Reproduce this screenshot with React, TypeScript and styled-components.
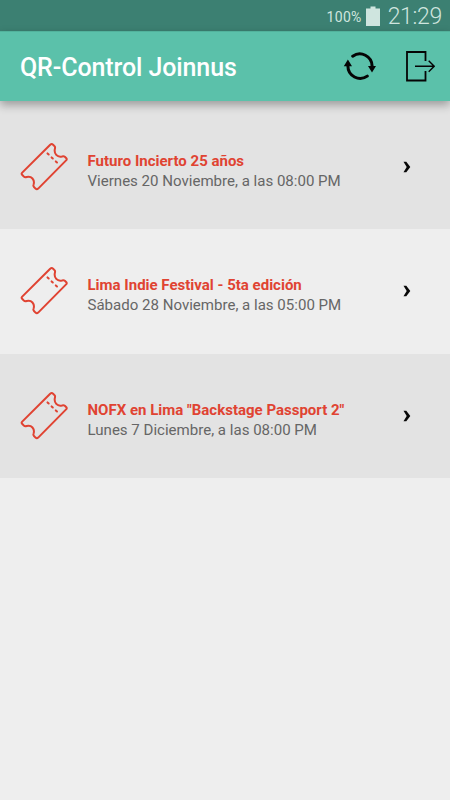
import React from "react";
import styled, { createGlobalStyle } from "styled-components";

const GlobalStyle = createGlobalStyle`
  * { box-sizing: border-box; }
  body { margin: 0; background: #eeeeee; font-family: Roboto, "Noto Sans", sans-serif; }
`;

const Screen = styled.div`
  display: flex;
  flex-direction: column;
  height: 800px;
  width: 450px;
  overflow: hidden;
  background: #eeeeee;
`;

const StatusBar = styled.div`
  flex: none;
  display: flex;
  align-items: center;
  justify-content: flex-end;
  height: 31px;
  padding: 2px 8px 0 0;
  background: #3c8072;
  color: #cfe5df;
`;

const BatteryLevel = styled.span`
  font-size: 14px;
  line-height: 20px;
  letter-spacing: 0.3px;
  margin-right: 4px;
`;

const BatteryIcon = styled.svg`
  width: 14px;
  height: 20px;
  margin: -2px 8px 0 0;
`;

const Clock = styled.span`
  font-size: 23px;
  line-height: 28px;
  font-weight: 350;
  letter-spacing: -0.3px;
`;

const Header = styled.header`
  flex: none;
  position: relative;
  z-index: 1;
  display: flex;
  align-items: center;
  height: 70px;
  padding: 0 15px 0 20px;
  background: #5bc1aa;
  border-top: 1px solid #52b29c;
  box-shadow: 0 4px 9px rgba(0, 0, 0, 0.32);
`;

const Title = styled.h1`
  flex: 1;
  margin: 2px 0 0;
  color: #fff;
  font-size: 25px;
  line-height: 32px;
  font-weight: 500;
  letter-spacing: -0.1px;
  white-space: nowrap;
`;

const Action = styled.button<{ $gap?: number }>`
  display: flex;
  padding: 0;
  border: 0;
  background: none;
  color: #050505;
  margin: -1px 0 0 ${(p) => p.$gap ?? 0}px;
`;

const List = styled.ul`
  margin: 0;
  padding: 3.4px 0 0;
  list-style: none;
  background: #e3e3e3;
`;

const Row = styled.li<{ $shaded: boolean }>`
  display: grid;
  grid-template-columns: 48px 1fr 8px;
  align-items: center;
  height: 124.6px;
  padding: 0 39.5px 0 20px;
  background: ${(p) => (p.$shaded ? "#e3e3e3" : "#eeeeee")};
`;

const Details = styled.div`
  margin-left: 19.5px;
  padding-top: 9px;
  white-space: nowrap;
`;

const EventName = styled.div`
  color: #e04332;
  font-size: 15px;
  line-height: 20px;
  font-weight: 700;
`;

const EventDate = styled.div`
  color: #666;
  font-size: 15.06px;
  line-height: 21px;
`;

const Chevron = styled.svg`
  width: 8px;
  height: 12px;
`;

const TicketIcon = () => (
  <svg width="48" height="48" viewBox="0 0 48 48" fill="none" stroke="#e04332" strokeWidth="2" strokeLinejoin="round" strokeLinecap="round">
    <path d="M30.2 1.7 Q31.7.4 33.1 1.7 L34.7 3.4 Q35.4 4.4 34.8 6.2 C34 10.6 37 14.6 42 13.5 Q43.8 12.9 44.8 13.7 L46.3 15.2 Q47.2 16.2 46.1 17.4 L18.2 45.6 Q16.8 46.8 15.5 45.6 L14 44 Q13 43 13.6 41.5 C15 37 11.5 32.5 6.6 34 Q5 34.6 3.8 33.5 L2.1 31.8 Q1.1 30.7 2.2 29.6 Z" />
    <path d="M27.5 10.4 L28.7 11.5 M31.6 14.4 L32.8 15.5 M35.8 18.4 L37 19.5" />
  </svg>
);

const RefreshIcon = () => (
  <svg width="34" height="30" viewBox="0 0 34 30" fill="none" stroke="currentColor" strokeWidth="3">
    <path d="M9.7 5.2 A12.3 12.3 0 0 1 29.1 15" strokeLinecap="round" />
    <path d="M24.3 25.1 A12.3 12.3 0 0 1 4.9 15" strokeLinecap="round" />
    <path d="M25 15 H33 L29 21.4 Z M0.8 15.2 H9 L4.9 8.6 Z" fill="currentColor" stroke="none" />
  </svg>
);

const ExitIcon = () => (
  <svg width="30" height="32" viewBox="0 0 30 32" fill="none" stroke="currentColor">
    <path d="M20.5 11 V2 H2 V30.5 H20.5 V21" strokeWidth="1.8" />
    <path d="M10 16.2 H29 M23.7 10.7 L29.2 16.2 L23.7 21.7" strokeWidth="1.4" />
  </svg>
);

const events = [
  { name: "Futuro Incierto 25 años", date: "Viernes 20 Noviembre, a las 08:00 PM" },
  { name: "Lima Indie Festival - 5ta edición", date: "Sábado 28 Noviembre, a las 05:00 PM" },
  { name: 'NOFX en Lima "Backstage Passport 2"', date: "Lunes 7 Diciembre, a las 08:00 PM" },
];

export default function App() {
  return (
    <Screen>
      <GlobalStyle />
      <StatusBar>
        <BatteryLevel>100%</BatteryLevel>
        <BatteryIcon viewBox="0 0 14 20">
          <path d="M0 2.5 H4.5 V0.5 H9.5 V2.5 H14 V20 H0 Z" fill="currentColor" />
        </BatteryIcon>
        <Clock>21:29</Clock>
      </StatusBar>
      <Header>
        <Title>QR-Control Joinnus</Title>
        <Action aria-label="Actualizar"><RefreshIcon /></Action>
        <Action aria-label="Salir" $gap={28}><ExitIcon /></Action>
      </Header>
      <List>
        {events.map((event, i) => (
          <Row key={event.name} $shaded={i % 2 === 0}>
            <TicketIcon />
            <Details>
              <EventName>{event.name}</EventName>
              <EventDate>{event.date}</EventDate>
            </Details>
            <Chevron viewBox="0 0 8 12">
              <path d="M0.5 0.8 H3.3 L7.3 6 L3.3 11.2 H0.5 L3.7 6 Z" fill="#080808" />
            </Chevron>
          </Row>
        ))}
      </List>
    </Screen>
  );
}
